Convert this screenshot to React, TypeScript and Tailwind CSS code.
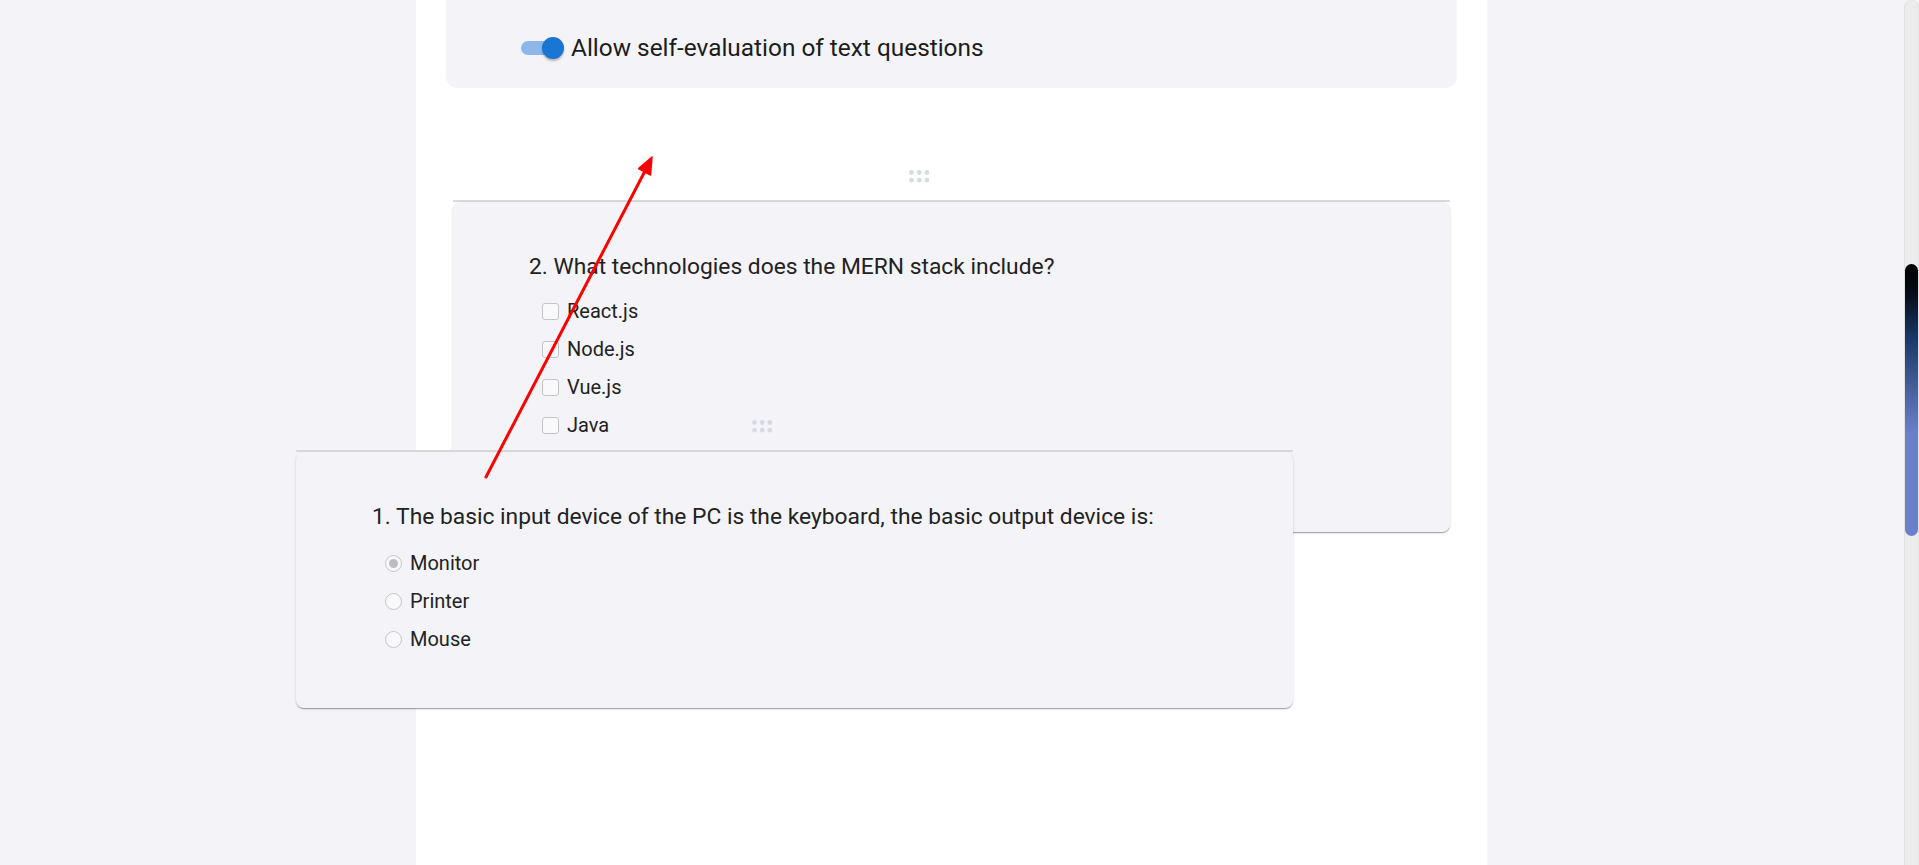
import React from "react";

interface Question {
  id: number;
  title: string;
  kind: "radio" | "checkbox";
  options: string[];
  checked?: number;
}

const questions: Question[] = [
  {
    id: 1,
    title: "1. The basic input device of the PC is the keyboard, the basic output device is:",
    kind: "radio",
    options: ["Monitor", "Printer", "Mouse"],
    checked: 0,
  },
  {
    id: 2,
    title: "2. What technologies does the MERN stack include?",
    kind: "checkbox",
    options: ["React.js", "Node.js", "Vue.js", "Java", "MongoDB"],
  },
];

const DragHandle = () => (
  <div className="h-[48px] flex items-center pl-[456px]">
    <svg width="21" height="13" viewBox="0 0 21 13">
      {[2.5, 10.2, 17.9].map((x) =>
        [2.5, 10.2].map((y) => <circle key={`${x}-${y}`} cx={x} cy={y} r="2.4" fill="#d6dbe1" />)
      )}
    </svg>
  </div>
);

const Mark = ({ kind, on }: { kind: Question["kind"]; on: boolean }) => {
  if (kind === "checkbox") {
    return <span className="block w-[17px] h-[17px] rounded-[3px] border-[1.5px] border-[#c4c4c4] bg-[#f9f9fb]" />;
  }
  return (
    <span className="flex items-center justify-center w-[17px] h-[17px] rounded-full border-[1.5px] border-[#c4c4c4] bg-[#f9f9fb]">
      {on && <span className="block w-[9px] h-[9px] rounded-full bg-[#bdbdbd]" />}
    </span>
  );
};

const QuestionCard = ({ q, gap }: { q: Question; gap: string }) => (
  <div className="w-[997px]">
    <DragHandle />
    <div className="h-[2px] bg-[#d9d9dc]" />
    <div className="bg-[#f4f4f8] rounded-lg pt-[48px] pb-[50px] pl-[76px] shadow-[0_2px_1px_-1px_rgba(0,0,0,0.2),0_1px_1px_0_rgba(0,0,0,0.14),0_1px_3px_0_rgba(0,0,0,0.12)]">
      <div className="text-[22.8px] leading-[34px] text-[#222]">{q.title}</div>
      <div className={`${gap} pl-[13px]`}>
        {q.options.map((opt, i) => (
          <div key={opt} className="h-[38px] flex items-center gap-[8px] text-[20px] text-[#222]">
            <Mark kind={q.kind} on={q.checked === i} />
            <span>{opt}</span>
          </div>
        ))}
      </div>
    </div>
  </div>
);

const Arrow = () => (
  <svg className="absolute inset-0 pointer-events-none" width="1919" height="865">
    <line x1="486" y1="477" x2="645" y2="171" stroke="#ff0000" strokeWidth="3" strokeLinecap="round" />
    <polygon points="652,157 650.5,175 638.5,168.5" fill="#ff0000" stroke="#ff0000" strokeWidth="1.5" strokeLinejoin="round" />
  </svg>
);

export default function App() {
  return (
    <div className="relative h-[865px] overflow-hidden flex bg-[#f4f4f8] font-['Roboto',sans-serif]">
      <div className="w-[416px]" />
      <div className="w-[1071px] bg-white">
        <div className="mx-[30px] bg-[#f4f4f8] rounded-b-[12px] pt-[30px] pb-[22px] pl-[75px]">
          <div className="h-[36px] flex items-center">
            <div className="relative w-[43px] h-[22px] flex items-center">
              <span className="block w-[40px] h-[14px] rounded-full bg-[#8db6ea]" />
              <span className="absolute right-0 top-0 w-[22px] h-[22px] rounded-full bg-[#1976d2] shadow-[0_2px_2px_rgba(0,0,0,0.25)]" />
            </div>
            <span className="ml-[7px] text-[24.4px] text-[#1c1c1c]">Allow self-evaluation of text questions</span>
          </div>
        </div>
        <div className="mt-[64px] pl-[37px]">
          <QuestionCard q={questions[1]} gap="mt-[8px]" />
        </div>
      </div>
      <div className="flex-1" />
      <div className="w-[15px] bg-[#ececec] rounded-t-full border-x border-[#e0e0e0] pt-[264px]">
        <div className="h-[272px] rounded-full bg-[linear-gradient(to_bottom,#000_0%,#050a14_10%,#1b3a6b_28%,#4b64a3_48%,#6a80c9_62%,#6a80c9_100%)]" />
      </div>

      {/* dragged preview */}
      <div className="absolute left-[296px] top-[402px]">
        <QuestionCard q={questions[0]} gap="mt-[10px]" />
      </div>
      <Arrow />
    </div>
  );
}
